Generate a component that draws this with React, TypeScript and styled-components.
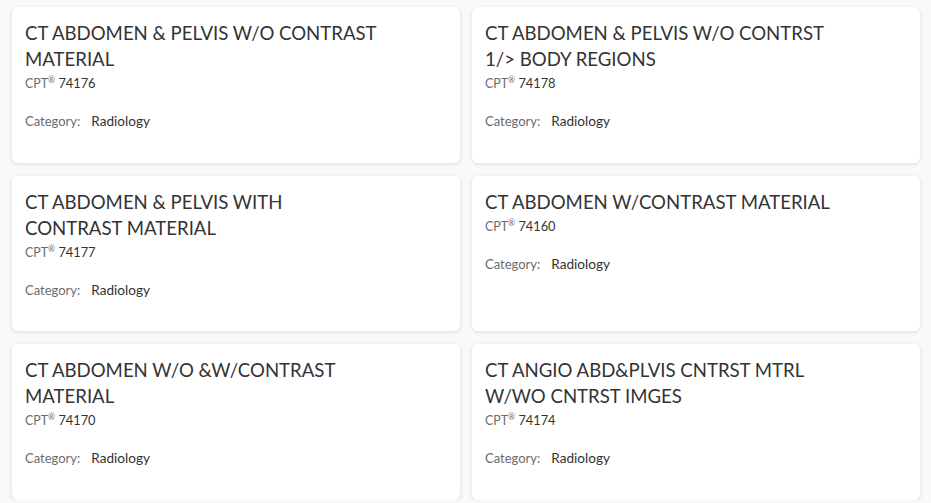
import React from "react";
import styled, { createGlobalStyle } from "styled-components";

const Global = createGlobalStyle`
  html, body { margin: 0; padding: 0; background: #f9f9f9; }
  body { font-family: "Lato", "Noto Sans", sans-serif; }
`;

const Grid = styled.div`
  display: grid;
  grid-template-columns: 448px 448px;
  column-gap: 12px;
  row-gap: 13px;
  padding: 7px 11px 0 12px;
`;

const Card = styled.div`
  background: #fff;
  border-radius: 6px;
  box-shadow: 0 1px 4px rgba(0, 0, 0, 0.13);
  min-height: 155.5px;
  box-sizing: border-box;
  padding: 13px 13px;
`;

const Title = styled.div`
  font-size: 18.6px;
  line-height: 26px;
  color: #333;
  max-width: 354px;
`;

const Cpt = styled.div`
  font-size: 12.8px;
  line-height: 22px;
  color: #333;
`;

const CptLabel = styled.span`
  color: #6b6b6b;
  font-size: 12.4px;
  sup {
    font-size: 8.5px;
    vertical-align: 5px;
    line-height: 0;
  }
`;

const CategoryRow = styled.div`
  margin-top: 16px;
  font-size: 13px;
  line-height: 20px;
  display: flex;
  gap: 11px;
`;

const CategoryLabel = styled.span`
  color: #6b6b6b;
`;

const CategoryValue = styled.span`
  color: #333;
  font-size: 13.6px;
`;

const items = [
  { title: "CT ABDOMEN & PELVIS W/O CONTRAST MATERIAL", code: "74176" },
  { title: "CT ABDOMEN & PELVIS W/O CONTRST 1/> BODY REGIONS", code: "74178" },
  { title: "CT ABDOMEN & PELVIS WITH CONTRAST MATERIAL", code: "74177" },
  { title: "CT ABDOMEN W/CONTRAST MATERIAL", code: "74160" },
  { title: "CT ABDOMEN W/O &W/CONTRAST MATERIAL", code: "74170" },
  { title: "CT ANGIO ABD&PLVIS CNTRST MTRL W/WO CNTRST IMGES", code: "74174" },
];

export default function App() {
  return (
    <>
      <Global />
      <Grid>
        {items.map((it) => (
          <Card key={it.code}>
            <Title>{it.title}</Title>
            <Cpt>
              <CptLabel>
                CPT<sup>®</sup>
              </CptLabel>{" "}
              {it.code}
            </Cpt>
            <CategoryRow>
              <CategoryLabel>Category:</CategoryLabel>
              <CategoryValue>Radiology</CategoryValue>
            </CategoryRow>
          </Card>
        ))}
      </Grid>
    </>
  );
}
